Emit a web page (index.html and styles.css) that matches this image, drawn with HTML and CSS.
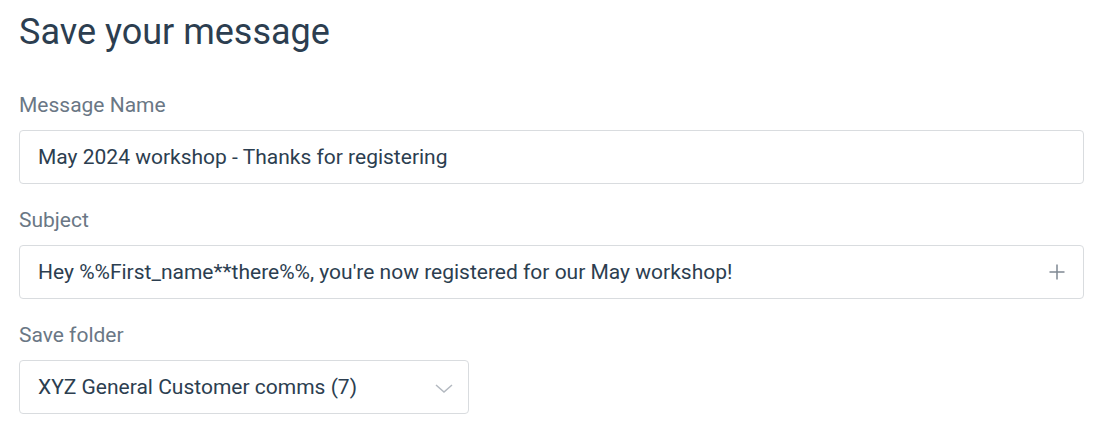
FILE: index.html
```html
<!DOCTYPE html>
<html>
<head>
<meta charset="utf-8">
<link rel="stylesheet" href="styles.css">
</head>
<body>
<div class="page">
  <h1 class="title">Save your message</h1>
  <div class="field">
    <label class="label">Message Name</label>
    <div class="input"><span class="value">May 2024 workshop - Thanks for registering</span></div>
  </div>
  <div class="field">
    <label class="label">Subject</label>
    <div class="input"><span class="value">Hey %%First_name**there%%, you're now registered for our May workshop!</span>
      <svg class="plus" width="16" height="16" viewBox="0 0 16 16"><path d="M8 0.5v15M0.5 8h15" stroke="#7f8893" stroke-width="1.5" fill="none"/></svg>
    </div>
  </div>
  <div class="field">
    <label class="label">Save folder</label>
    <div class="input select"><span class="value">XYZ General Customer comms (7)</span>
      <svg class="chev" width="18" height="9" viewBox="0 0 18 9"><path d="M1 1l8 7 8-7" stroke="#b3b9c0" stroke-width="1.5" fill="none"/></svg>
    </div>
  </div>
</div>
</body>
</html>
```
FILE: styles.css
```css
* { box-sizing: border-box; }
body { margin: 0; background: #fff; font-family: Roboto, "Liberation Sans", sans-serif; }
.page { padding: 0 20px 0 19px; }
.title { margin: 0; padding-top: 10px; font-size: 36px; font-weight: 400; color: #2c3e50; line-height: 44px; }
.field { display: flex; flex-direction: column; }
.title + .field { margin-top: 37px; }
.field + .field { margin-top: 22px; }
.label { font-size: 21px; color: #6a7785; line-height: 28px; margin-bottom: 11px; }
.input { height: 54px; border: 1px solid #d9dcdf; border-radius: 4px; display: flex; align-items: center; padding: 0 18px; font-size: 21px; color: #2c3e50; }
.value { flex: 1; }
.select { width: 450px; }
.chev { margin-right: -3px; margin-top: 2px; }
```
